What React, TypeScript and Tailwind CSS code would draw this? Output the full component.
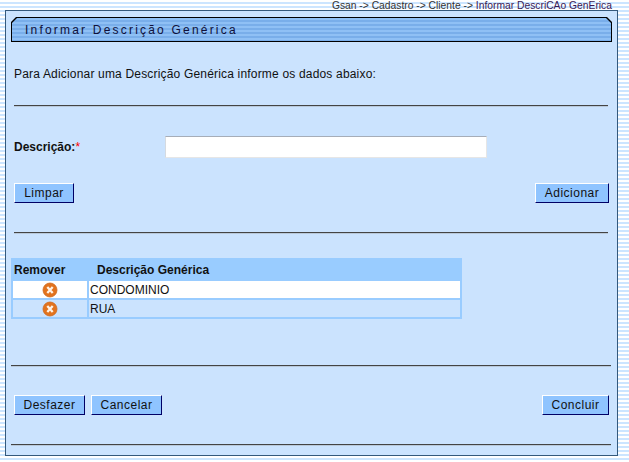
const Rule = ({ className }: { className: string }) => (
  <div className={`h-px bg-[#444] shadow-[0_1px_0_#b9c9da] ${className}`} />
);

const Btn = ({ label, w }: { label: string; w: string }) => (
  <button
    className={`h-5 ${w} border border-t-white border-l-white border-r-[#000066] border-b-[#000066] bg-[#8fc4ff] text-[12px] leading-[18px] tracking-[0.5px] text-[#111] text-center`}
  >
    {label}
  </button>
);

const XIcon = () => (
  <svg width="16" height="16" viewBox="0 0 16 16" className="block">
    <circle cx="8" cy="8" r="7" fill="#e2731e" stroke="#cf6a1c" strokeWidth="0.8" />
    <path d="M5.3 5 L10.7 11 M10.7 5 L5.3 11" stroke="#fff3e6" strokeWidth="2.3" fill="none" />
  </svg>
);

export default function App() {
  return (
    <div className="relative h-[462px] w-[629px] overflow-hidden bg-[repeating-linear-gradient(to_bottom,#ffffff_0,#ffffff_2px,#cce5ff_2px,#cce5ff_4px)] font-['Liberation_Sans',Arial,sans-serif] text-[12px] text-[#111]">
      <div className="h-[10px] whitespace-nowrap pr-[17px] text-right text-[10.3px] leading-[12px] text-[#333]">
        Gsan -&gt; Cadastro -&gt; Cliente -&gt; <span className="text-[#3a1a55]">Informar DescriCAo GenErica</span>
      </div>
      <div className="ml-[5px] h-[446px] w-[613px] border border-[#34597c] bg-[#cbe3fe] pt-[6px]">
        <div className="ml-[5px] h-[25px] w-[601px] bg-black p-px [clip-path:polygon(5px_0,calc(100%-5px)_0,100%_5px,100%_100%,0_100%,0_5px)]">
          <div className="flex h-full items-center bg-[repeating-linear-gradient(to_bottom,#8fc0f5_0,#8fc0f5_2px,#79aeea_2px,#79aeea_4px)] pl-[13px] text-[12px] tracking-[2.2px] text-[#10103a] [clip-path:polygon(5px_0,calc(100%-5px)_0,100%_5px,100%_100%,0_100%,0_5px)]">
            Informar Descrição Genérica
          </div>
        </div>

        <p className="ml-2 mt-[25px] leading-[14px] tracking-[0.18px]">Para Adicionar uma Descrição Genérica informe os dados abaixo:</p>
        <Rule className="ml-2 mt-[24px] w-[594px]" />

        <div className="ml-2 mt-[30px] flex h-[22px] items-center">
          <label className="w-[151px] font-bold">
            Descrição:<span className="font-normal text-[#ff0000]">*</span>
          </label>
          <input className="h-[22px] w-[322px] border border-t-[#a6adb8] border-l-[#d5dae0] border-r-[#e6e6e6] border-b-[#e6e6e6] bg-white" />
        </div>

        <div className="ml-2 mt-[25px] flex w-[595px] justify-between">
          <Btn label="Limpar" w="w-[60px]" />
          <Btn label="Adicionar" w="w-[74px]" />
        </div>
        <Rule className="ml-2 mt-[29px] w-[594px]" />

        <div className="ml-[5px] mt-[25px] w-[451px] bg-[#99ccff] pb-[2px] pl-[2px] pr-[2px]">
          <div className="flex h-[23px] items-center font-bold">
            <span className="w-[84px] pl-px">Remover</span>
            <span>Descrição Genérica</span>
          </div>
          <div className="flex h-[17px] gap-[2px]">
            <div className="flex w-[74px] items-center justify-center bg-white"><XIcon /></div>
            <div className="flex flex-1 items-center bg-white pl-px">CONDOMINIO</div>
          </div>
          <div className="mt-[2px] flex h-[17px] gap-[2px]">
            <div className="flex w-[74px] items-center justify-center bg-[#cbe3fe]"><XIcon /></div>
            <div className="flex flex-1 items-center bg-[#cbe3fe] pl-px">RUA</div>
          </div>
        </div>

        <Rule className="ml-[5px] mt-[46px] w-[600px]" />
        <div className="ml-2 mt-[29px] flex w-[595px] justify-between">
          <div className="flex gap-[6px]">
            <Btn label="Desfazer" w="w-[71px]" />
            <Btn label="Cancelar" w="w-[71px]" />
          </div>
          <Btn label="Concluir" w="w-[67px]" />
        </div>
        <Rule className="ml-[5px] mt-[29px] w-[600px]" />
      </div>
    </div>
  );
}
